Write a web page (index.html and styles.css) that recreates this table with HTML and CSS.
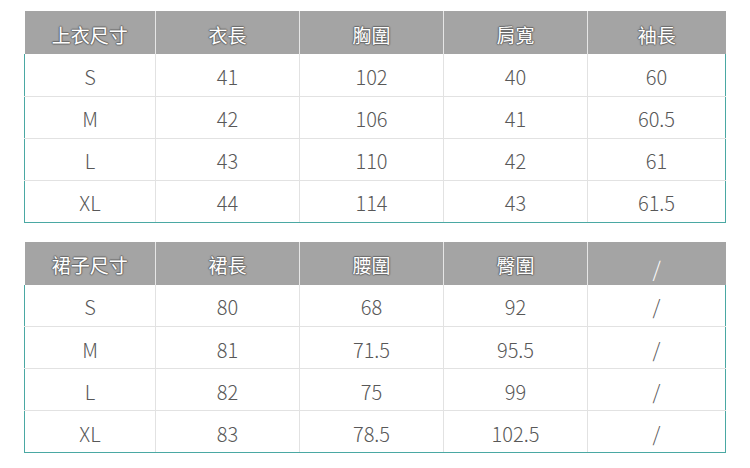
FILE: index.html
```html
<!DOCTYPE html>
<html lang="zh-Hant">
<head>
<meta charset="utf-8">
<title>尺寸表</title>
<link rel="stylesheet" href="styles.css">
</head>
<body>
<div class="page">
  <table class="size-table">
    <colgroup><col class="c1"><col class="c2"><col class="c3"><col class="c4"><col class="c5"></colgroup>
    <thead>
      <tr><th>上衣尺寸</th><th>衣長</th><th>胸圍</th><th>肩寬</th><th>袖長</th></tr>
    </thead>
    <tbody>
      <tr><td>S</td><td>41</td><td>102</td><td>40</td><td>60</td></tr>
      <tr><td>M</td><td>42</td><td>106</td><td>41</td><td>60.5</td></tr>
      <tr><td>L</td><td>43</td><td>110</td><td>42</td><td>61</td></tr>
      <tr><td>XL</td><td>44</td><td>114</td><td>43</td><td>61.5</td></tr>
    </tbody>
  </table>
  <table class="size-table">
    <colgroup><col class="c1"><col class="c2"><col class="c3"><col class="c4"><col class="c5"></colgroup>
    <thead>
      <tr><th>裙子尺寸</th><th>裙長</th><th>腰圍</th><th>臀圍</th><th class="slash">/</th></tr>
    </thead>
    <tbody>
      <tr><td>S</td><td>80</td><td>68</td><td>92</td><td>/</td></tr>
      <tr><td>M</td><td>81</td><td>71.5</td><td>95.5</td><td>/</td></tr>
      <tr><td>L</td><td>82</td><td>75</td><td>99</td><td>/</td></tr>
      <tr><td>XL</td><td>83</td><td>78.5</td><td>102.5</td><td>/</td></tr>
    </tbody>
  </table>
</div>
</body>
</html>
```

FILE: styles.css
```css
html, body {
  margin: 0;
  padding: 0;
  background: #ffffff;
}

.page {
  padding: 11px 0 0 24px;
  display: flex;
  flex-direction: column;
  gap: 19px;
  font-family: "Noto Sans CJK TC", "Noto Sans", sans-serif;
}

.size-table {
  border-collapse: collapse;
  table-layout: fixed;
  width: 701px;
}

.c1 { width: 131px; }
.c2 { width: 144px; }
.c3 { width: 144px; }
.c4 { width: 144px; }
.c5 { width: 138px; }

.size-table th {
  height: 43px;
  padding: 3px 0 0 0;
  box-sizing: border-box;
  background: #a4a4a4;
  color: #ffffff;
  font-size: 19px;
  font-weight: 400;
  text-align: center;
  vertical-align: middle;
  border-left: 1px solid #e6e6e6;
  text-shadow: 1px 0 1px #6a6a6a, -1px 0 1px #6a6a6a, 0 1px 1px #6a6a6a, 0 -1px 1px #6a6a6a;
}

.size-table th:first-child {
  border-left: none;
}

.size-table th.slash {
  text-shadow: none;
  font-weight: 300;
  font-size: 21px;
  padding-top: 9px;
}

.size-table td {
  height: 42px;
  padding: 3px 0 0 0;
  box-sizing: border-box;
  text-align: center;
  vertical-align: middle;
  font-size: 20px;
  font-weight: 300;
  color: #585858;
  border: 1px solid #e2e2e2;
}

.size-table td:first-child {
  border-left: 1px solid #4aa8a3;
}

.size-table td:last-child {
  border-right: 1px solid #4aa8a3;
}

.size-table tbody tr:first-child td {
  border-top: none;
}

.size-table tbody tr:last-child td {
  border-bottom: 1px solid #4aa8a3;
}
```
